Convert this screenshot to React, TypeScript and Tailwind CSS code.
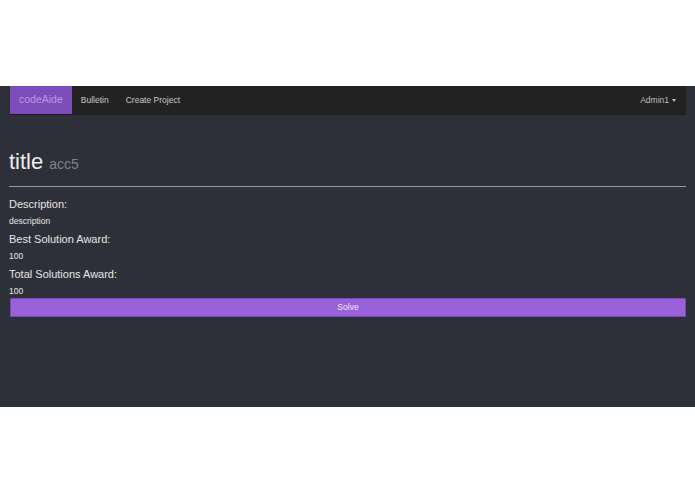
import React from 'react';

const App: React.FC = () => {
  return (
    <div className="w-[695px] h-[494px] bg-white" style={{ fontFamily: '"Liberation Sans", Arial, sans-serif' }}>
      <div className="h-[86px]" />
      <div className="h-[321px] bg-[#2e3039] pl-[10px] pr-[9px]">
        <nav className="h-[29px] bg-[#222222] flex items-center border-b border-[#1a1a1a]">
          <a className="h-full px-[9px] flex items-center bg-[#7d4cbb] text-[#b99be0] text-[10.5px]">codeAide</a>
          <a className="px-[9px] text-[#c8c8c8] text-[8.5px]">Bulletin</a>
          <a className="px-[8px] text-[#c8c8c8] text-[8.5px]">Create Project</a>
          <div className="ml-auto pr-[10px] text-[#bdbdbd] text-[8.5px] flex items-center gap-[3px]">
            Admin1
            <span className="inline-block w-0 h-0 border-l-[2.5px] border-r-[2.5px] border-t-[3px] border-l-transparent border-r-transparent border-t-[#bdbdbd]" />
          </div>
        </nav>
        <div className="-ml-[1px]">
          <div className="pt-[36px] flex items-baseline gap-[6px]">
            <span className="text-[22px] text-[#ededed] leading-none">title</span>
            <span className="text-[14px] text-[#7f8087] leading-none">acc5</span>
          </div>
          <div className="mt-[13px] h-px bg-[#9a9ba2]" />
          <div className="mt-[10px] text-[11px] text-[#e6e6e6] leading-[14px]">Description:</div>
          <div className="mt-[4px] text-[8.5px] text-[#e6e6e6] leading-[12px]">description</div>
          <div className="mt-[5px] text-[11px] text-[#e6e6e6] leading-[14px]">Best Solution Award:</div>
          <div className="mt-[4px] text-[8.5px] text-[#e6e6e6] leading-[12px]">100</div>
          <div className="mt-[5px] text-[11px] text-[#e6e6e6] leading-[14px]">Total Solutions Award:</div>
          <div className="mt-[4px] text-[8.5px] text-[#e6e6e6] leading-[12px]">100</div>
        </div>
        <button className="mt-[1px] w-full h-[19px] bg-[#9a62da] border border-[#7a45b5] text-[#f0e8fb] text-[8.5px] flex items-center justify-center">
          Solve
        </button>
      </div>
    </div>
  );
};

export default App;
